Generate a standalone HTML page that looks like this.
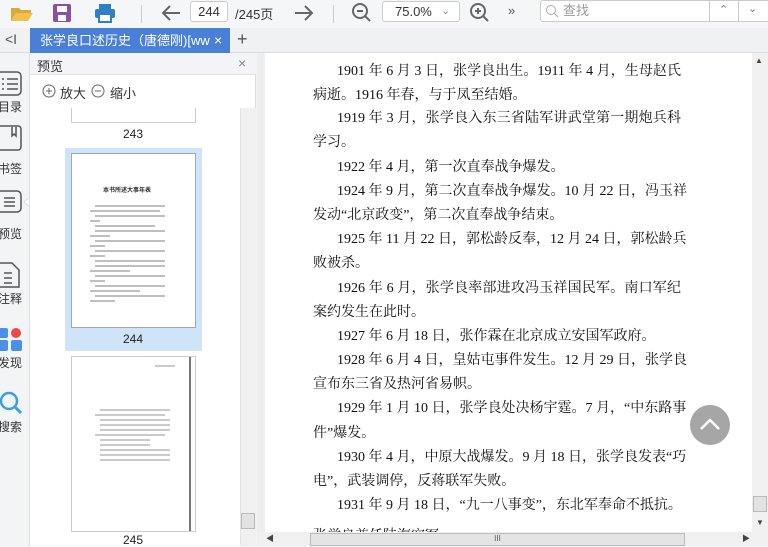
<!DOCTYPE html>
<html><head><meta charset="utf-8"><style>
*{margin:0;padding:0;box-sizing:border-box}
body{width:768px;height:546px;overflow:hidden;background:#f3f4f6;font-family:"Liberation Sans","Noto Sans CJK SC",sans-serif;position:relative;color:#333}
.abs{position:absolute}
.tb{left:0;top:0;width:768px;height:28px;background:#f5f6f8}
.tabbar{left:0;top:28px;width:768px;height:25px;background:#f0f1f3;border-bottom:1px solid #dcdcdc}
.tab{left:30px;top:28px;width:200px;height:25px;background:#4a7fd6;color:#fff;font-size:13px;line-height:25px}
.side{left:0;top:53px;width:30px;height:493px;background:#f3f4f6;border-right:1px solid #ddd}
.side .lb{position:absolute;left:-2px;font-size:12px;color:#333}
.panel{left:30px;top:53px;width:226px;height:493px;background:#fff;border-right:1px solid #ddd}
.main{left:257px;top:53px;width:511px;height:493px;background:#eceef0}
.page{left:265px;top:53px;width:487px;height:479px;background:#fff}
.ln{position:absolute;left:313px;width:368px;font-family:"Liberation Serif","Noto Serif CJK SC",serif;font-size:14px;color:#111;text-align:justify;text-align-last:justify;white-space:nowrap;height:20px;line-height:20px}
.ln.i{left:337px;width:344px}
.ln.s{text-align-last:left}
</style></head><body>
<div class="abs tb"></div>
<svg class="abs" style="left:10px;top:4px" width="24" height="18"><path d="M1 4h8l2 2h10v3H6L1 17z" fill="#d9a93a"/><path d="M6 9h17l-5 8H1z" fill="#f0c050"/></svg>
<svg class="abs" style="left:52px;top:3px" width="20" height="20"><rect x="1" y="1" width="18" height="18" rx="2" fill="#8c4fa8"/><rect x="5" y="3" width="10" height="6" fill="#fff"/><rect x="6" y="12" width="8" height="6" fill="#fff"/></svg>
<svg class="abs" style="left:94px;top:3px" width="22" height="20"><rect x="5" y="1" width="12" height="5" fill="#2f7fc8"/><rect x="1" y="6" width="20" height="9" rx="2" fill="#2f7fc8"/><rect x="5" y="11" width="12" height="8" fill="#fff" stroke="#2f7fc8" stroke-width="2"/></svg>
<div class="abs" style="left:141px;top:5px;width:1px;height:18px;background:#ccc"></div>
<svg class="abs" style="left:160px;top:3px" width="22" height="20"><path d="M20 10H3M10 3L3 10l7 7" stroke="#666" stroke-width="2" fill="none"/></svg>
<div class="abs" style="left:190px;top:1px;width:38px;height:21px;border:1px solid #ccc;border-radius:3px;background:#fff;font-size:13px;text-align:center;line-height:19px">244</div>
<div class="abs" style="left:235px;top:4px;font-size:13px">/245页</div>
<svg class="abs" style="left:293px;top:3px" width="22" height="20"><path d="M2 10h17M12 3l7 7-7 7" stroke="#666" stroke-width="2" fill="none"/></svg>
<div class="abs" style="left:333px;top:5px;width:1px;height:18px;background:#ccc"></div>
<svg class="abs" style="left:351px;top:2px" width="22" height="22"><circle cx="9" cy="9" r="7" stroke="#666" stroke-width="2" fill="none"/><path d="M6 9h6M14 14l5 5" stroke="#666" stroke-width="2"/></svg>
<div class="abs" style="left:382px;top:1px;width:78px;height:21px;border:1px solid #ccc;border-radius:3px;background:#fff;font-size:13px;line-height:19px;padding-left:12px">75.0%<span style="position:absolute;left:58px;color:#888;font-size:11px">&#8964;</span></div>
<svg class="abs" style="left:469px;top:2px" width="22" height="22"><circle cx="9" cy="9" r="7" stroke="#666" stroke-width="2" fill="none"/><path d="M6 9h6M9 6v6M14 14l5 5" stroke="#666" stroke-width="2"/></svg>
<div class="abs" style="left:508px;top:3px;font-size:13px;color:#555">»</div>
<div class="abs" style="left:540px;top:0;width:236px;height:22px;border:1px solid #ccc;border-radius:3px;background:#fff;font-size:13px;line-height:20px;padding-left:22px;color:#999">查找</div>
<svg class="abs" style="left:545px;top:4px" width="14" height="14"><circle cx="6" cy="6" r="4.5" stroke="#aaa" fill="none"/><path d="M9 9l4 4" stroke="#aaa"/></svg>
<div class="abs" style="left:709px;top:0;width:1px;height:22px;background:#ccc"></div>
<div class="abs" style="left:738px;top:0;width:1px;height:22px;background:#ccc"></div>
<div class="abs" style="left:719px;top:3px;font-size:11px;color:#777">&#8963;</div>
<div class="abs" style="left:748px;top:2px;font-size:11px;color:#777">&#8964;</div>

<div class="abs tabbar"></div>
<div class="abs" style="left:5px;top:31px;font-size:14px;color:#555">&lt;I</div>
<div class="abs tab"><div style="position:absolute;left:10px;width:170px;overflow:hidden;white-space:nowrap">张学良口述历史（唐德刚)[www.</div><span style="position:absolute;left:184px;font-size:14px">×</span></div>
<div class="abs" style="left:237px;top:29px;font-size:18px;color:#555">+</div>

<div class="abs side">
<svg class="abs" style="left:0;top:18px" width="22" height="26"><rect x="-4" y="1" width="25" height="23" rx="4" stroke="#555" fill="none" stroke-width="1.5"/><path d="M2 8h2M7 8h11M2 13h2M7 13h11M2 18h2M7 18h11" stroke="#555" stroke-width="1.5"/></svg>
<div class="lb" style="top:45px">目录</div>
<svg class="abs" style="left:0;top:72px" width="22" height="26"><rect x="-4" y="1" width="25" height="24" rx="3" stroke="#555" fill="none" stroke-width="1.5"/><path d="M12 2v9l2-2 2 2V2" stroke="#555" fill="none" stroke-width="1.5"/></svg>
<div class="lb" style="top:107px">书签</div>
<svg class="abs" style="left:0;top:135px" width="30" height="26"><rect x="-4" y="3" width="25" height="21" rx="4" stroke="#555" fill="#f3f4f6" stroke-width="1.5"/><path d="M4 10h11M4 14h11M4 18h11" stroke="#555" stroke-width="1.5"/><path d="M29 10l-5 4 5 4" fill="#fff" stroke="#ddd"/></svg>
<div class="lb" style="top:172px">预览</div>
<svg class="abs" style="left:0;top:208px" width="22" height="28"><path d="M-3 2h15l7 7v17h-22z" stroke="#555" fill="none" stroke-width="1.5"/><path d="M4 12h8M4 17h8M4 22h8" stroke="#555" stroke-width="1.5"/></svg>
<div class="lb" style="top:237px">注释</div>
<svg class="abs" style="left:0;top:274px" width="24" height="26"><rect x="-3" y="1" width="11" height="10" rx="2" fill="#4a8fe8"/><circle cx="16" cy="6" r="5" fill="#f04848"/><rect x="-3" y="13" width="11" height="11" rx="2" fill="#4a8fe8"/><rect x="11" y="13" width="11" height="11" rx="2" fill="#4a8fe8"/></svg>
<div class="lb" style="top:301px">发现</div>
<svg class="abs" style="left:0;top:338px" width="24" height="26"><circle cx="9" cy="10" r="8" stroke="#3aa0e0" stroke-width="2.5" fill="none"/><path d="M15 16l6 6" stroke="#3aa0e0" stroke-width="3"/></svg>
<div class="lb" style="top:365px">搜索</div>
</div>

<div class="abs panel">
<div class="abs" style="left:0;top:0;width:226px;height:22px;background:#f3f4f6;border-bottom:1px solid #e2e2e2"></div>
<div class="abs" style="left:7px;top:3px;font-size:13px">预览</div>
<div class="abs" style="left:208px;top:2px;font-size:14px;color:#888">×</div>
<svg class="abs" style="left:12px;top:31px" width="14" height="14"><circle cx="7" cy="7" r="6" stroke="#666" fill="none"/><path d="M4 7h6M7 4v6" stroke="#666"/></svg>
<div class="abs" style="left:30px;top:30px;font-size:13px">放大</div>
<svg class="abs" style="left:61px;top:31px" width="14" height="14"><circle cx="7" cy="7" r="6" stroke="#666" fill="none"/><path d="M4 7h6" stroke="#666"/></svg>
<div class="abs" style="left:80px;top:30px;font-size:13px">缩小</div>
<div class="abs" style="left:41px;top:55px;width:125px;height:15px;border:1px solid #ccc;border-top:none;background:#fff"></div>
<div class="abs" style="left:93px;top:74px;font-size:12px;color:#222">243</div>
<div class="abs" style="left:35px;top:95px;width:137px;height:203px;background:#cfe4f7"></div>
<div class="abs" style="left:41px;top:100px;width:125px;height:175px;background:#fff;border:1px solid #9ab"></div>
<div class="abs" style="left:73px;top:132px;font-size:6px;font-weight:bold;color:#333">本书所述大事年表</div>
<svg class="abs" style="left:60px;top:150px" width="95" height="100"><g stroke="#999" stroke-width="1.2"><path d="M5 3h70M0 8h70M5 13h70M0 18h10M5 23h60M5 28h70M0 33h20M5 38h70M0 43h15M5 48h70M0 53h15M5 58h70M5 63h70M0 68h40M5 73h70M0 78h15M5 83h70M0 88h50M5 93h70M0 98h25"/></g></svg>
<div class="abs" style="left:93px;top:279px;font-size:12px;color:#222">244</div>
<div class="abs" style="left:41px;top:303px;width:125px;height:176px;background:#fff;border:1px solid #ccc"></div>
<div class="abs" style="left:159px;top:304px;width:2px;height:174px;background:#777"></div>
<svg class="abs" style="left:60px;top:310px" width="95" height="100"><g stroke="#aaa" stroke-width="1.2"><path d="M65 3h20M10 47h70M5 52h70M10 57h70M10 62h70M10 67h70M5 72h70M10 77h50M10 82h50M10 87h70M10 92h70M10 97h70"/></g></svg>
<div class="abs" style="left:93px;top:480px;font-size:12px;color:#222">245</div>
<div class="abs" style="left:210px;top:55px;width:16px;height:438px;background:#f0f0f0;border-left:1px solid #e3e3e3"></div>
<div class="abs" style="left:211px;top:460px;width:14px;height:16px;background:#e2e2e2;border:1px solid #bbb"></div>
</div>

<div class="abs main"></div>
<div class="abs page"></div>
<div class="abs" style="left:752px;top:53px;width:16px;height:479px;background:#f0f0f0"></div>
<div class="abs" style="left:755px;top:56px;font-size:8px;color:#444">▲</div>
<div class="abs" style="left:753px;top:496px;width:14px;height:16px;background:#e2e2e2;border:1px solid #bbb"></div>
<div class="abs" style="left:756px;top:518px;font-size:8px;color:#444">▼</div>
<div class="abs" style="left:257px;top:532px;width:511px;height:14px;background:#f0f0f0"></div>
<div class="abs" style="left:310px;top:533px;width:375px;height:13px;background:#e4e4e4;border:1px solid #bbb;font-size:8px;text-align:center;color:#555">III</div>
<div class="abs" style="left:266px;top:533px;font-size:8px;color:#444">◀</div>
<div class="abs" style="left:742px;top:533px;font-size:8px;color:#444">▶</div>

<div class="ln i" style="top:62px">1901 年 6 月 3 日，张学良出生。1911 年 4 月，生母赵氏</div>
<div class="ln s" style="top:86px">病逝。1916 年春，与于凤至结婚。</div>
<div class="ln i" style="top:109px">1919 年 3 月，张学良入东三省陆军讲武堂第一期炮兵科</div>
<div class="ln s" style="top:133px">学习。</div>
<div class="ln i s" style="top:158px">1922 年 4 月，第一次直奉战争爆发。</div>
<div class="ln i" style="top:182px">1924 年 9 月，第二次直奉战争爆发。10 月 22 日，冯玉祥</div>
<div class="ln s" style="top:206px">发动“北京政变”，第二次直奉战争结束。</div>
<div class="ln i" style="top:230px">1925 年 11 月 22 日，郭松龄反奉，12 月 24 日，郭松龄兵</div>
<div class="ln s" style="top:254px">败被杀。</div>
<div class="ln i" style="top:279px">1926 年 6 月，张学良率部进攻冯玉祥国民军。南口军纪</div>
<div class="ln s" style="top:303px">案约发生在此时。</div>
<div class="ln i s" style="top:327px">1927 年 6 月 18 日，张作霖在北京成立安国军政府。</div>
<div class="ln i" style="top:351px">1928 年 6 月 4 日，皇姑屯事件发生。12 月 29 日，张学良</div>
<div class="ln s" style="top:375px">宣布东三省及热河省易帜。</div>
<div class="ln i" style="top:399px">1929 年 1 月 10 日，张学良处决杨宇霆。7 月，“中东路事</div>
<div class="ln s" style="top:424px">件”爆发。</div>
<div class="ln i" style="top:448px">1930 年 4 月，中原大战爆发。9 月 18 日，张学良发表“巧</div>
<div class="ln s" style="top:472px">电”，武装调停，反蒋联军失败。</div>
<div class="ln i" style="top:496px">1931 年 9 月 18 日，“九一八事变”，东北军奉命不抵抗。</div>
<div class="abs" style="left:257px;top:520px;width:495px;height:12px;overflow:hidden"><div class="ln s" style="left:56px;top:7px">张学良兼任陆海空军</div></div>

<div class="abs" style="left:690px;top:405px;width:40px;height:40px;border-radius:50%;background:#a6a6a6"></div>
<svg class="abs" style="left:690px;top:405px" width="40" height="40"><path d="M11 24l9-9 9 9" stroke="#fff" stroke-width="2.5" fill="none"/></svg>
</body></html>
